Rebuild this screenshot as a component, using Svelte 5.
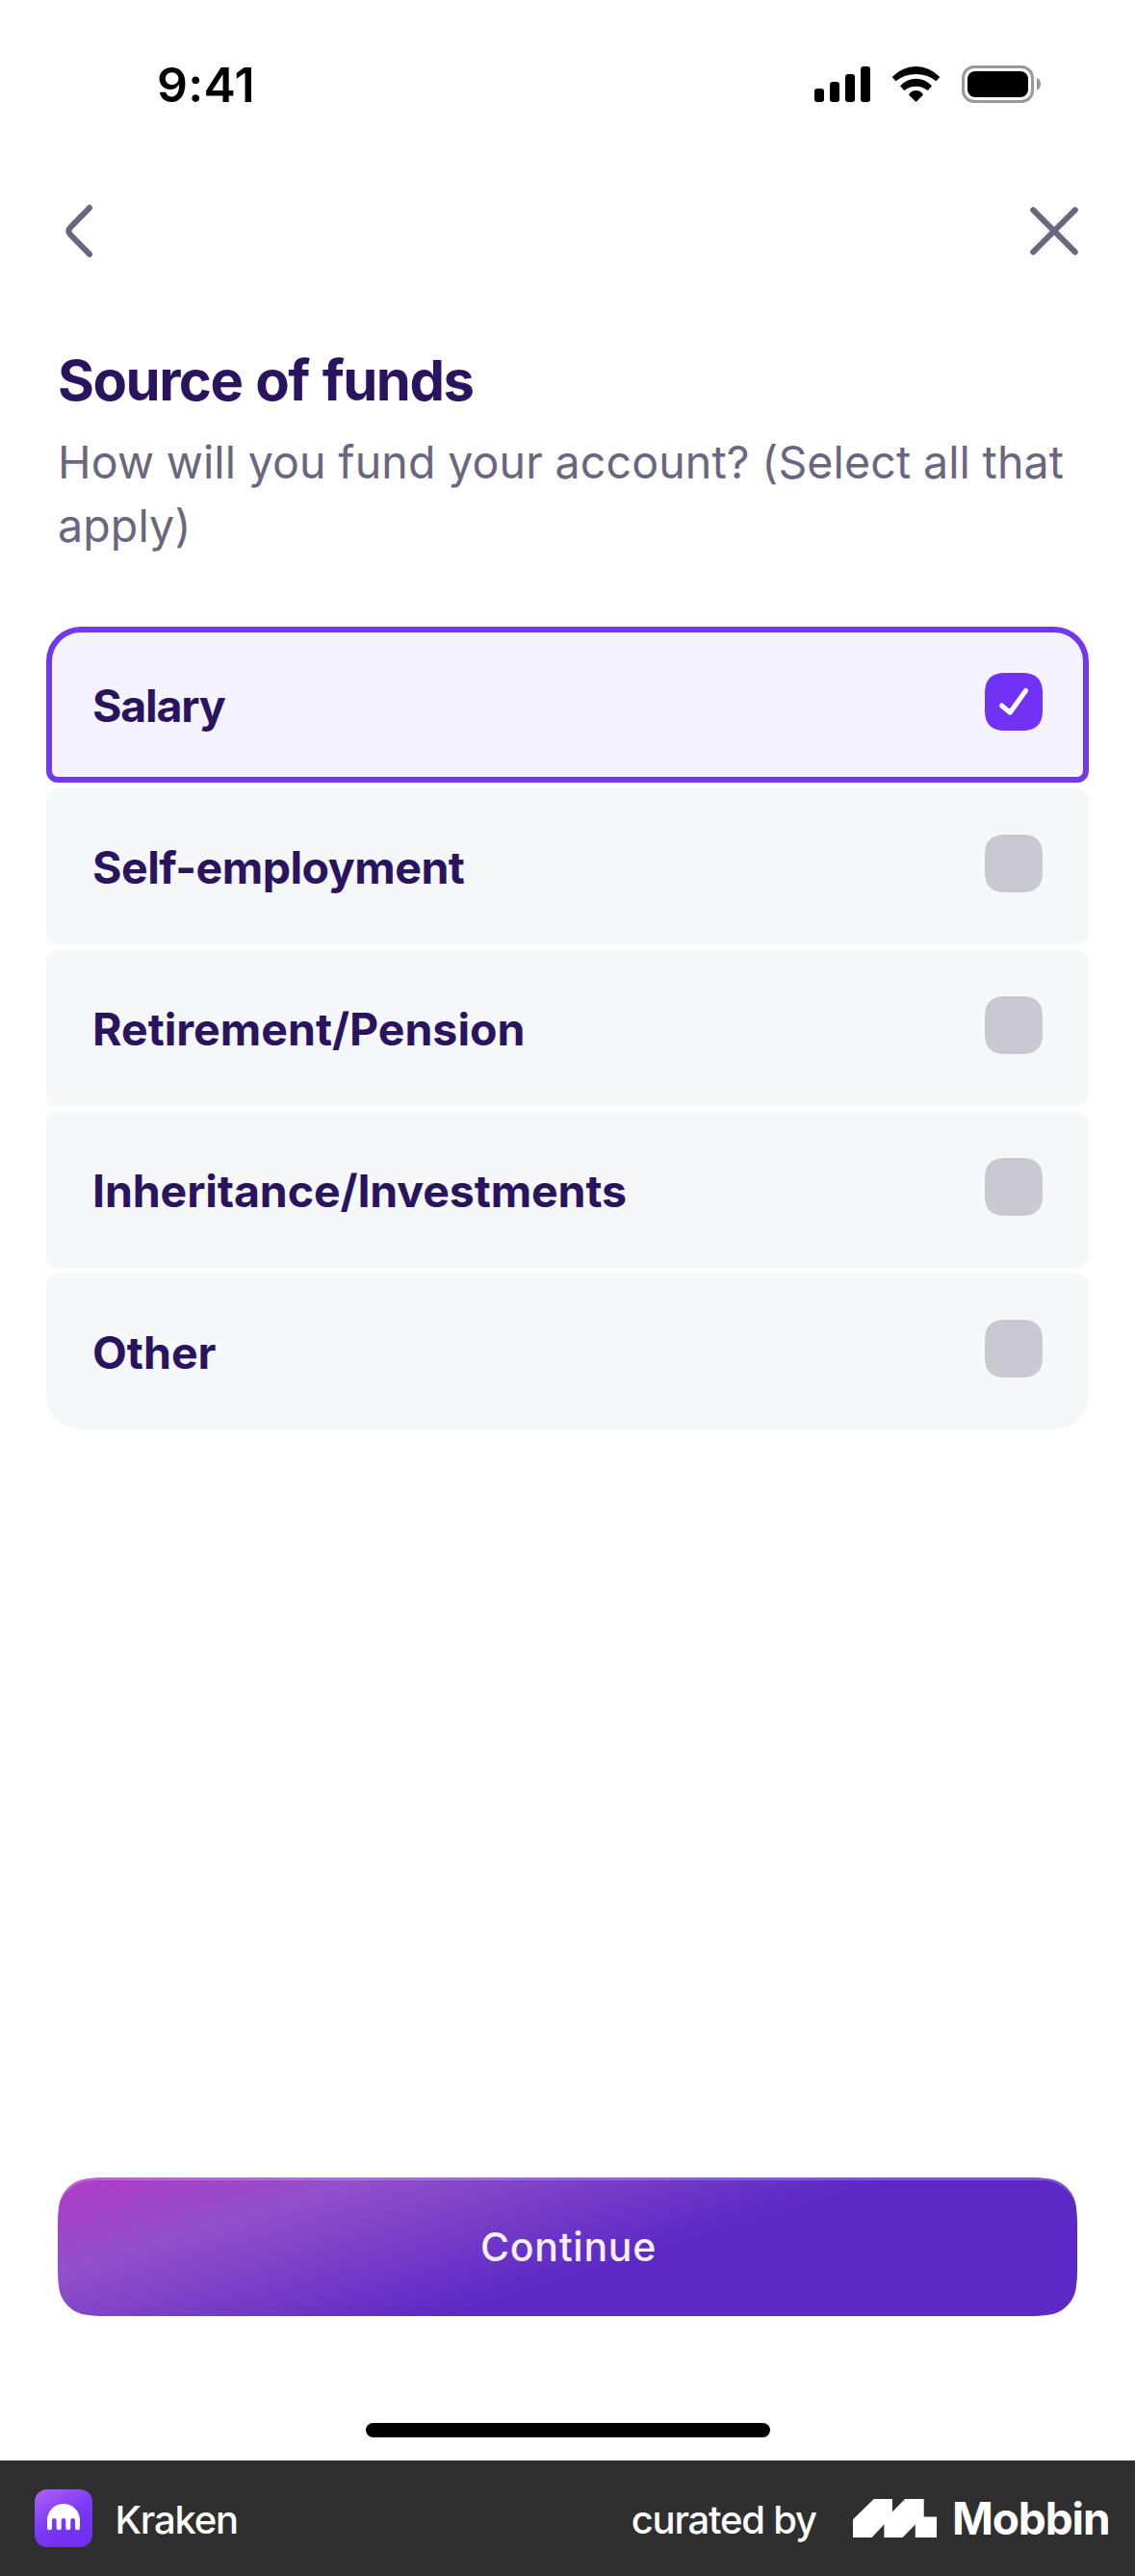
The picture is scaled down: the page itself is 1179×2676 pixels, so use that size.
<script>
  let options = $state([
    { label: 'Salary', checked: true, spacing: 'tight' },
    { label: 'Self-employment', checked: false, spacing: 'snug' },
    { label: 'Retirement/Pension', checked: false, spacing: '' },
    { label: 'Inheritance/Investments', checked: false, spacing: 'close' },
    { label: 'Other', checked: false, spacing: '' }
  ]);
</script>

<div class="screen">
  <header class="status">
    <span class="time">9:41</span>
    <div class="indicators">
      <svg class="signal" viewBox="0 0 58 37" width="58" height="37">
        <rect x="0" y="23" width="10" height="14" rx="3" />
        <rect x="16" y="16" width="10" height="21" rx="3" />
        <rect x="32" y="8" width="10" height="29" rx="3" />
        <rect x="48" y="0" width="10" height="37" rx="3" />
      </svg>
      <svg class="wifi" viewBox="0 0 51 39" width="51" height="39">
        <path d="M.7 12A33.5 33.5 0 0 1 50.3 12L46.4 16.3A33.4 33.4 0 0 0 4.6 16.3Z" />
        <path d="M9 21.3A21.7 21.7 0 0 1 42 21.3L37.7 26A19.5 19.5 0 0 0 13.3 26Z" />
        <path d="M18 30.5A8.6 8.6 0 0 1 33 30.5L25.5 38Z" />
      </svg>
      <svg class="battery" viewBox="0 0 83 39" width="83" height="39">
        <rect x="1.5" y="1.5" width="72" height="36" rx="11.5" fill="none" stroke="#999" stroke-width="3" />
        <rect x="6" y="6" width="63" height="27" rx="8" />
        <path d="M78 13c2.5.5 4 3 4 6.2s-1.5 5.7-4 6.3z" fill="#999" />
      </svg>
    </div>
  </header>

  <nav class="nav">
    <button aria-label="Back">
      <svg viewBox="0 0 60 60" width="60" height="60">
        <path d="M27 5.8 7.2 26.2Q3.4 30 7.2 33.8L27 54.2" />
      </svg>
    </button>
    <button aria-label="Close">
      <svg viewBox="0 0 60 60" width="60" height="60">
        <path d="M8.2 8.2 51.8 51.8M51.8 8.2 8.2 51.8" />
      </svg>
    </button>
  </nav>

  <main>
    <h1>Source of funds</h1>
    <p class="hint">How will you fund your account? (Select all that apply)</p>

    <div class="options">
      {#each options as option}
        <button
          class="option"
          class:selected={option.checked}
          role="checkbox"
          aria-checked={option.checked}
          onclick={() => (option.checked = !option.checked)}
        >
          <span class="label {option.spacing}">{option.label}</span>
          <svg class="box" viewBox="0 0 60 60" width="60" height="60">
            <path
              class="shape"
              d="M22 0H38C46 0 51 1.5 54.8 5.2 58.5 9 60 14 60 22V38C60 46 58.5 51 54.8 54.8 51 58.5 46 60 38 60H22C14 60 9 58.5 5.2 54.8 1.5 51 0 46 0 38V22C0 14 1.5 9 5.2 5.2 9 1.5 14 0 22 0Z"
            />
            {#if option.checked}
              <path class="tick" d="M17.5 34 26.2 41.2 42.5 18.5" />
            {/if}
          </svg>
        </button>
      {/each}
    </div>
  </main>

  <div class="action">
    <button class="continue">Continue</button>
  </div>
  <div class="home"><span></span></div>

  <footer>
    <svg class="app" viewBox="0 0 60 60" width="60" height="60">
      <defs>
        <linearGradient id="app-bg" x1="0.05" y1="0" x2="0.55" y2="0.9">
          <stop offset="0" stop-color="#b061f6" />
          <stop offset=".6" stop-color="#7c3bf4" />
          <stop offset="1" stop-color="#7230f2" />
        </linearGradient>
      </defs>
      <rect width="60" height="60" rx="13" fill="url(#app-bg)" />
      <path
        fill="#fff"
        d="M13 32A17 17 0 0 1 47 32V39.7a2.5 2.5 0 0 1-5 0V32.3a2.35 2.35 0 0 0-4.7 0V39.7a2.5 2.5 0 0 1-5 0V32.3a2.3 2.3 0 0 0-4.6 0V39.7a2.5 2.5 0 0 1-5 0V32.3a2.35 2.35 0 0 0-4.7 0V39.7a2.5 2.5 0 0 1-5 0Z"
      />
    </svg>
    <span class="name">Kraken</span>
    <span class="curated">curated by</span>
    <svg class="mark" viewBox="0 0 87 40" width="87" height="40">
      <path fill="#fff" d="M0 21.3 21.7 0H41V13.2L54.1 0H73.7V18.5H87V40H64.8V26.5L51.6 40H32.4V26.5L19.6 40H0Z" />
    </svg>
    <span class="brand">Mobbin</span>
  </footer>
</div>

<style>
  :global(body) {
    background: #fff;
  }
  .screen {
    width: 1179px;
    height: 2676px;
    display: flex;
    flex-direction: column;
    background: #fff;
    font-family: Inter, "Liberation Sans", sans-serif;
    overflow: hidden;
  }
  button {
    margin: 0;
    padding: 0;
    border: 0;
    background: none;
    font: inherit;
    text-align: left;
  }
  svg {
    display: block;
    flex: none;
  }

  .status {
    height: 177px;
    box-sizing: border-box;
    padding: 57px 97px 0 163px;
    display: flex;
    justify-content: space-between;
    align-items: flex-start;
  }
  .time {
    font-size: 50px;
    line-height: 62px;
    font-weight: 600;
    letter-spacing: 0.3px;
  }
  .indicators {
    display: flex;
    gap: 22px;
    padding-top: 11px;
  }
  .signal {
    margin-top: 1px;
  }

  .nav {
    height: 126px;
    box-sizing: border-box;
    padding: 33px 54px 0 66px;
    display: flex;
    justify-content: space-between;
  }
  .nav button {
    height: 60px;
  }
  .nav path {
    fill: none;
    stroke: #6b667f;
    stroke-width: 6;
    stroke-linecap: round;
    stroke-linejoin: round;
  }

  main {
    flex: 1;
    padding: 56px 48px 0;
  }
  h1 {
    margin: 0;
    padding: 0 12px;
    font-size: 58px;
    line-height: 72px;
    font-weight: 700;
    letter-spacing: -1.5px;
    word-spacing: 1.5px;
    color: #2a1460;
  }
  .hint {
    margin: 16px 0 0;
    padding: 0 12px;
    font-size: 46.5px;
    line-height: 66px;
    letter-spacing: 0.14px;
    word-spacing: -0.6px;
    color: #6b667f;
  }

  .options {
    margin-top: 72px;
    display: flex;
    flex-direction: column;
    gap: 6px;
  }
  .option {
    height: 162px;
    box-sizing: border-box;
    border: 6px solid #f5f7f9;
    border-radius: 12px;
    background: #f5f7f9;
    padding: 42px 42px 0;
    display: flex;
    justify-content: space-between;
    align-items: flex-start;
  }
  .option:first-child {
    border-top-left-radius: 36px;
    border-top-right-radius: 36px;
  }
  .option:last-child {
    border-bottom-left-radius: 36px;
    border-bottom-right-radius: 36px;
  }
  .option.selected {
    border-color: #7237ee;
    background: #f5f3ff;
  }
  .label {
    margin-top: 4px;
    font-size: 46.5px;
    line-height: 60px;
    font-weight: 700;
    color: #2a1460;
  }
  .label.tight {
    letter-spacing: -1.2px;
  }
  .label.snug {
    letter-spacing: -0.5px;
  }
  .label.close {
    letter-spacing: -0.12px;
  }
  .shape {
    fill: #cac8d2;
  }
  .selected .shape {
    fill: #7132f5;
  }
  .tick {
    fill: none;
    stroke: #fff;
    stroke-width: 5;
    stroke-linecap: round;
    stroke-linejoin: round;
  }

  .action {
    padding: 0 60px;
  }
  .continue {
    width: 100%;
    height: 144px;
    padding-left: 2px;
    border-radius: 36px;
    clip-path: path("M0 50C0 42 .3 36 1.2 30C3 14 14 3 30 1.2C36 .3 42 0 50 0H1009C1017 0 1023 .3 1029 1.2C1045 3 1056 14 1057.8 30C1058.7 36 1059 42 1059 50V94C1059 102 1058.7 108 1057.8 114C1056 130 1045 141 1029 142.8C1023 143.7 1017 144 1009 144H50C42 144 36 143.7 30 142.8C14 141 3 130 1.2 114C.3 108 0 102 0 94Z");
    background: linear-gradient(162.8deg, #b13ac7 0%, #9250ca 21%, #5c29c6 57%);
    box-shadow: inset 0 3px 0 rgba(255, 255, 255, 0.2);
    color: #f5effe;
    font-size: 41px;
    line-height: 144px;
    font-weight: 500;
    letter-spacing: 0.75px;
    text-align: center;
  }
  .home {
    height: 150px;
    box-sizing: border-box;
    padding-top: 111px;
    display: flex;
    justify-content: center;
  }
  .home span {
    width: 420px;
    height: 15px;
    border-radius: 8px;
    background: #000;
  }

  footer {
    height: 120px;
    box-sizing: border-box;
    padding: 0 26.5px 0 36px;
    display: flex;
    align-items: center;
    background: #2f2f2f;
    color: #fff;
  }
  .name,
  .curated {
    padding-top: 2px;
    font-size: 40px;
    font-weight: 500;
    letter-spacing: -1.2px;
  }
  .name {
    margin-left: 23.5px;
  }
  .curated {
    margin-left: auto;
  }
  .mark {
    margin: 0 16px 0 38px;
  }
  .brand {
    font-size: 46px;
    font-weight: 700;
    letter-spacing: -1.1px;
  }
</style>
